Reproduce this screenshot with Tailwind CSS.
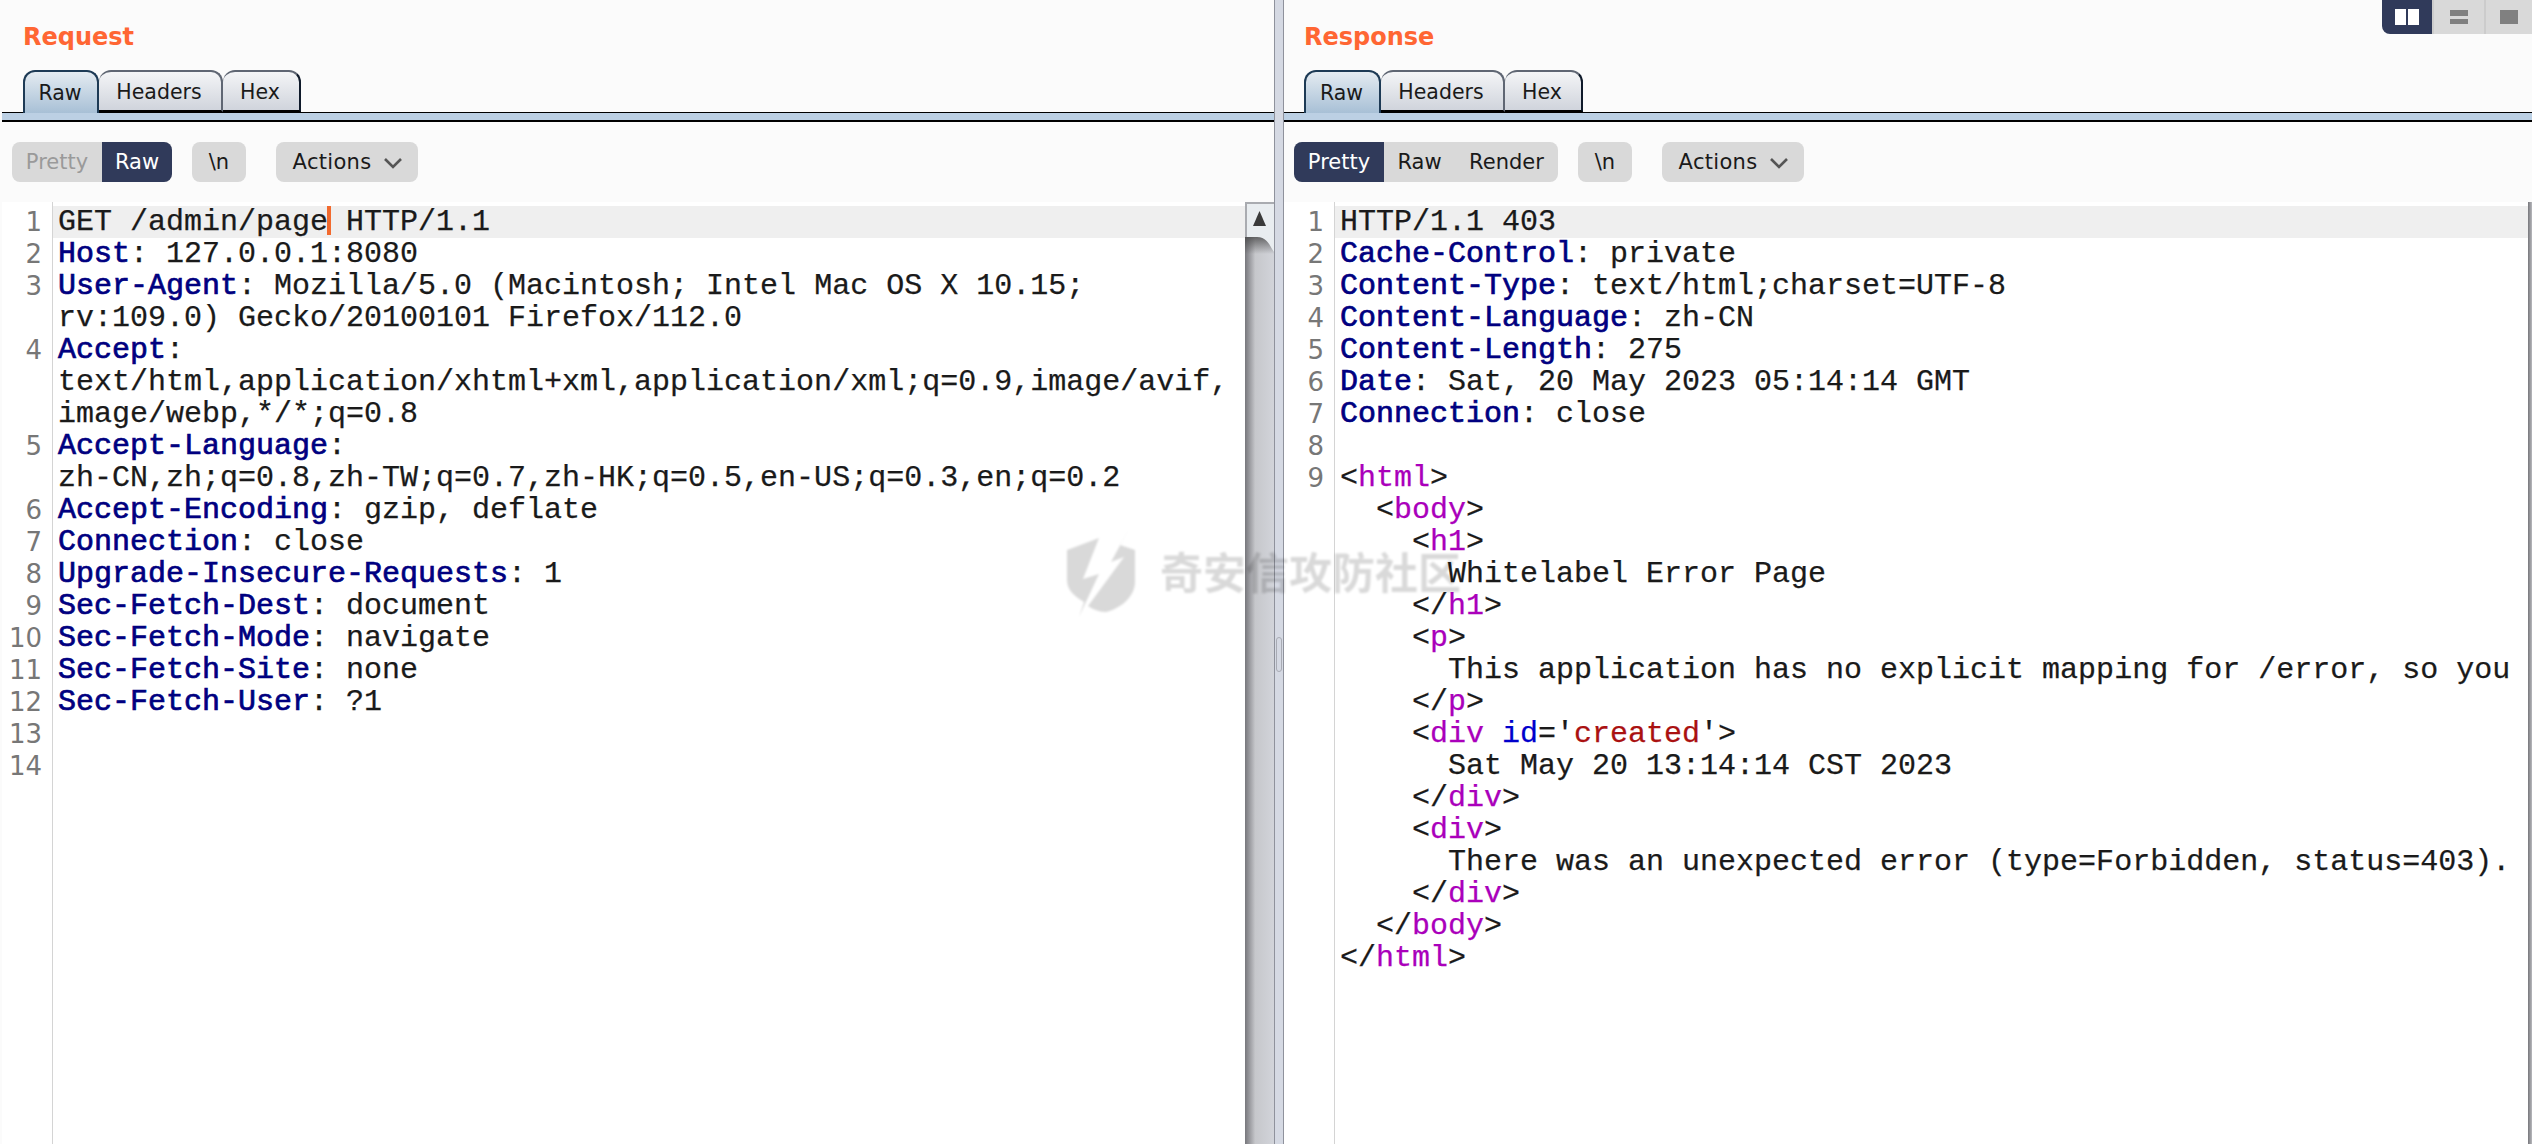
<!DOCTYPE html>
<html lang="en">
<head>
    <meta charset="UTF-8">
    <title>Repeater</title>
    <script src="https://cdn.jsdelivr.net/npm/@tailwindcss/browser@4"></script>
</head>
<body class="bg-[#fbfbfb]">
<div class="relative flex h-[1144px] w-[2532px] overflow-hidden bg-[#fbfbfb] font-['DejaVu_Sans',sans-serif] text-[#1a1a1a]">

    <!-- Request pane -->
    <section class="flex w-[1274px] flex-col">
        <h2 class="h-[70px] shrink-0 pl-[23px] pt-[22px] text-[24px] leading-[30px] font-bold text-[#ff6633]">Request</h2>
        <div class="ml-[2px] flex h-[43px] shrink-0 border-b border-black pl-[21px] text-[20.5px]">
            <div class="relative -mb-px flex w-[76px] items-center justify-center rounded-t-[12px] border-2 border-b-0 border-[#1d3a55] bg-linear-to-b from-[#e4ebf1] to-[#a8c0d6] pt-[2px] pr-[2px]">Raw</div>
            <div class="flex w-[124px] items-center justify-center rounded-t-[12px] border-2 border-l-0 border-[#5f6673] bg-linear-to-b from-[#f4f5f7] to-[#d0d4dc] pt-[2px] pr-[2px] [border-bottom-color:#000]">Headers</div>
            <div class="flex w-[78px] items-center justify-center rounded-t-[12px] border-2 border-l-0 border-[#5f6673] bg-linear-to-b from-[#f4f5f7] to-[#d0d4dc] pt-[2px] pr-[2px] [border-bottom-color:#000] [border-right-color:#0f1a2a]">Hex</div>
        </div>
        <div class="ml-[2px] h-[9px] shrink-0 border-b-2 border-black bg-[#bcd0e4]"></div>
        <div class="flex h-[80px] shrink-0 items-start pl-[12px] pt-[20px] text-[21px]">
            <div class="flex h-[40px] w-[160px] overflow-hidden rounded-lg bg-[#d9d9d9]">
                <div class="flex w-[90px] items-center justify-center pt-[2px] text-[#9a9a9a]">Pretty</div>
                <div class="flex w-[70px] items-center justify-center bg-[#303a5a] pt-[2px] text-white">Raw</div>
            </div>
            <div class="ml-[20px] flex h-[40px] w-[54px] items-center justify-center rounded-lg bg-[#d9d9d9] pt-[2px]">\n</div>
            <div class="ml-[30px] flex h-[40px] w-[142px] items-center justify-center gap-[13px] rounded-lg bg-[#d9d9d9] pt-[2px] pl-[1px] tracking-[0.3px]">
                Actions
                <svg class="h-[12px] w-[18px]" viewBox="0 0 18 12" fill="none" stroke="#555" stroke-width="2.6"><path d="M1 2l8 8 8-8"/></svg>
            </div>
        </div>
        <div class="ml-[2px] flex min-h-0 flex-1 bg-white">
            <div class="w-[51px] shrink-0 border-r border-[#d4d4d4] pt-[4px] pr-[10px] text-right text-[26px] leading-[32px] text-[#777]">
                <div>1</div><div>2</div><div>3</div><div>&nbsp;</div><div>4</div><div>&nbsp;</div><div>&nbsp;</div><div>5</div><div>&nbsp;</div><div>6</div><div>7</div><div>8</div><div>9</div><div>10</div><div>11</div><div>12</div><div>13</div><div>14</div>
            </div>
            <div class="min-w-0 flex-1 overflow-hidden pt-[4px] font-['Liberation_Mono',monospace] text-[30px] leading-[32px] [-webkit-text-stroke:0.25px] *:h-[32px] *:pl-[5px] *:whitespace-pre">
                <div class="flex bg-[#efefef]">GET /admin/page<span class="-mr-[3px] -ml-[1px] h-[29px] w-[4px] bg-[#f26a2e]"></span> HTTP/1.1</div>
                <div><span class="text-[#000080] [-webkit-text-stroke:0.7px]">Host</span>: 127.0.0.1:8080</div>
                <div><span class="text-[#000080] [-webkit-text-stroke:0.7px]">User-Agent</span>: Mozilla/5.0 (Macintosh; Intel Mac OS X 10.15;</div>
                <div>rv:109.0) Gecko/20100101 Firefox/112.0</div>
                <div><span class="text-[#000080] [-webkit-text-stroke:0.7px]">Accept</span>:</div>
                <div>text/html,application/xhtml+xml,application/xml;q=0.9,image/avif,</div>
                <div>image/webp,*/*;q=0.8</div>
                <div><span class="text-[#000080] [-webkit-text-stroke:0.7px]">Accept-Language</span>:</div>
                <div>zh-CN,zh;q=0.8,zh-TW;q=0.7,zh-HK;q=0.5,en-US;q=0.3,en;q=0.2</div>
                <div><span class="text-[#000080] [-webkit-text-stroke:0.7px]">Accept-Encoding</span>: gzip, deflate</div>
                <div><span class="text-[#000080] [-webkit-text-stroke:0.7px]">Connection</span>: close</div>
                <div><span class="text-[#000080] [-webkit-text-stroke:0.7px]">Upgrade-Insecure-Requests</span>: 1</div>
                <div><span class="text-[#000080] [-webkit-text-stroke:0.7px]">Sec-Fetch-Dest</span>: document</div>
                <div><span class="text-[#000080] [-webkit-text-stroke:0.7px]">Sec-Fetch-Mode</span>: navigate</div>
                <div><span class="text-[#000080] [-webkit-text-stroke:0.7px]">Sec-Fetch-Site</span>: none</div>
                <div><span class="text-[#000080] [-webkit-text-stroke:0.7px]">Sec-Fetch-User</span>: ?1</div>
            </div>
            <!-- scrollbar -->
            <div class="w-[29px] shrink-0 bg-linear-to-r from-[#77777c] from-0% via-[#c6c7cb] via-35% to-[#d2d4da]">
                <svg class="block" width="29" height="52" viewBox="0 0 29 52">
                    <defs><linearGradient id="thumbShade" x1="0" y1="0" x2="0" y2="1"><stop offset="0" stop-color="#444" stop-opacity=".8"/><stop offset="1" stop-color="#444" stop-opacity="0"/></linearGradient></defs>
                    <rect y="34" width="29" height="18" fill="url(#thumbShade)"/>
                    <path d="M0 0H29V50C25 44 22 35 12 35H0Z" fill="#e9edf0"/>
                    <path d="M1 35V1H29" fill="none" stroke="#a9abb0" stroke-width="2"/>
                    <path d="M14.5 9L21 24H8Z" fill="#3a3a3a"/>
                </svg>
            </div>
        </div>
    </section>

    <!-- split divider -->
    <div class="w-[10px] shrink-0 border-x border-[#8f929c] bg-[#d5d9e3] pt-[637px]">
        <div class="mx-auto h-[35px] w-[6px] rounded-full border border-[#a8abb4]"></div>
    </div>

    <!-- Response pane -->
    <section class="relative flex min-w-0 flex-1 flex-col">
        <div class="absolute top-0 right-0 flex h-[34px]">
            <div class="flex w-[50px] items-center justify-center gap-[2px] rounded-bl-lg bg-[#303a5a]">
                <span class="h-[16px] w-[11px] bg-white"></span><span class="h-[16px] w-[11px] bg-white"></span>
            </div>
            <div class="flex w-[52px] flex-col items-center justify-center gap-[3px] border-l-2 border-[#cccccc] bg-[#d9d9d9]">
                <span class="h-[6px] w-[18px] bg-[#808080]"></span><span class="h-[5px] w-[18px] bg-[#808080]"></span>
            </div>
            <div class="flex w-[48px] items-center justify-center border-l-2 border-[#cccccc] bg-[#d9d9d9]">
                <span class="h-[14px] w-[18px] bg-[#808080]"></span>
            </div>
        </div>
        <h2 class="h-[70px] shrink-0 pl-[20px] pt-[22px] text-[24px] leading-[30px] font-bold text-[#ff6633]">Response</h2>
        <div class="flex h-[43px] shrink-0 border-b border-black pl-[20px] text-[20.5px]">
            <div class="relative -mb-px flex w-[77px] items-center justify-center rounded-t-[12px] border-2 border-b-0 border-[#1d3a55] bg-linear-to-b from-[#e4ebf1] to-[#a8c0d6] pt-[2px] pr-[2px]">Raw</div>
            <div class="flex w-[124px] items-center justify-center rounded-t-[12px] border-2 border-l-0 border-[#5f6673] bg-linear-to-b from-[#f4f5f7] to-[#d0d4dc] pt-[2px] pr-[2px] [border-bottom-color:#000]">Headers</div>
            <div class="flex w-[78px] items-center justify-center rounded-t-[12px] border-2 border-l-0 border-[#5f6673] bg-linear-to-b from-[#f4f5f7] to-[#d0d4dc] pt-[2px] pr-[2px] [border-bottom-color:#000] [border-right-color:#0f1a2a]">Hex</div>
        </div>
        <div class="h-[9px] shrink-0 border-b-2 border-black bg-[#bcd0e4]"></div>
        <div class="flex h-[80px] shrink-0 items-start pl-[10px] pt-[20px] text-[21px]">
            <div class="flex h-[40px] w-[264px] overflow-hidden rounded-lg bg-[#d9d9d9]">
                <div class="flex w-[90px] items-center justify-center bg-[#303a5a] pt-[2px] text-white">Pretty</div>
                <div class="flex w-[71px] items-center justify-center pt-[2px]">Raw</div>
                <div class="flex w-[103px] items-center justify-center pt-[2px]">Render</div>
            </div>
            <div class="ml-[20px] flex h-[40px] w-[54px] items-center justify-center rounded-lg bg-[#d9d9d9] pt-[2px]">\n</div>
            <div class="ml-[30px] flex h-[40px] w-[142px] items-center justify-center gap-[13px] rounded-lg bg-[#d9d9d9] pt-[2px] pl-[1px] tracking-[0.3px]">
                Actions
                <svg class="h-[12px] w-[18px]" viewBox="0 0 18 12" fill="none" stroke="#555" stroke-width="2.6"><path d="M1 2l8 8 8-8"/></svg>
            </div>
        </div>
        <div class="flex min-h-0 flex-1 bg-white">
            <div class="w-[51px] shrink-0 border-r border-[#d4d4d4] pt-[4px] pr-[10px] text-right text-[26px] leading-[32px] text-[#777]">
                <div>1</div><div>2</div><div>3</div><div>4</div><div>5</div><div>6</div><div>7</div><div>8</div><div>9</div>
            </div>
            <div class="min-w-0 flex-1 overflow-hidden pt-[4px] font-['Liberation_Mono',monospace] text-[30px] leading-[32px] [-webkit-text-stroke:0.25px] *:h-[32px] *:pl-[5px] *:whitespace-pre">
                <div class="bg-[#efefef]">HTTP/1.1 403</div>
                <div><span class="text-[#000080] [-webkit-text-stroke:0.7px]">Cache-Control</span>: private</div>
                <div><span class="text-[#000080] [-webkit-text-stroke:0.7px]">Content-Type</span>: text/html;charset=UTF-8</div>
                <div><span class="text-[#000080] [-webkit-text-stroke:0.7px]">Content-Language</span>: zh-CN</div>
                <div><span class="text-[#000080] [-webkit-text-stroke:0.7px]">Content-Length</span>: 275</div>
                <div><span class="text-[#000080] [-webkit-text-stroke:0.7px]">Date</span>: Sat, 20 May 2023 05:14:14 GMT</div>
                <div><span class="text-[#000080] [-webkit-text-stroke:0.7px]">Connection</span>: close</div>
                <div></div>
                <div>&lt;<span class="text-[#aa00bb]">html</span>&gt;</div>
                <div>  &lt;<span class="text-[#aa00bb]">body</span>&gt;</div>
                <div>    &lt;<span class="text-[#aa00bb]">h1</span>&gt;</div>
                <div>      Whitelabel Error Page</div>
                <div>    &lt;/<span class="text-[#aa00bb]">h1</span>&gt;</div>
                <div>    &lt;<span class="text-[#aa00bb]">p</span>&gt;</div>
                <div>      This application has no explicit mapping for /error, so you</div>
                <div>    &lt;/<span class="text-[#aa00bb]">p</span>&gt;</div>
                <div>    &lt;<span class="text-[#aa00bb]">div</span> <span class="text-[#0000cc]">id</span>='<span class="text-[#aa1111]">created</span>'&gt;</div>
                <div>      Sat May 20 13:14:14 CST 2023</div>
                <div>    &lt;/<span class="text-[#aa00bb]">div</span>&gt;</div>
                <div>    &lt;<span class="text-[#aa00bb]">div</span>&gt;</div>
                <div>      There was an unexpected error (type=Forbidden, status=403).</div>
                <div>    &lt;/<span class="text-[#aa00bb]">div</span>&gt;</div>
                <div>  &lt;/<span class="text-[#aa00bb]">body</span>&gt;</div>
                <div>&lt;/<span class="text-[#aa00bb]">html</span>&gt;</div>
            </div>
            <div class="w-[4px] shrink-0 bg-linear-to-r from-[#77777c] to-[#b8b9bd]"></div>
        </div>
    </section>

    <!-- watermark -->
    <div class="pointer-events-none absolute top-[520px] left-[1060px] flex items-center gap-[10px] blur-[0.8px]">
        <svg class="h-[100px] w-[90px] fill-black/15" viewBox="0 0 90 100">
            <path d="M7 30L39 18 23 59 39 54 19 97 24 82C14 76 7 70 7 60Z"/>
            <path d="M70 7L60 25 75 30V62C75 76 62 88 46 92 40 92 34 90 28 86L64 37 51 42Z"/>
        </svg>
        <span class="font-['Noto_Sans_CJK_SC',sans-serif] text-[43px] leading-[50px] font-bold whitespace-nowrap text-black/15">奇安信攻防社区</span>
    </div>
</div>
</body>
</html>
